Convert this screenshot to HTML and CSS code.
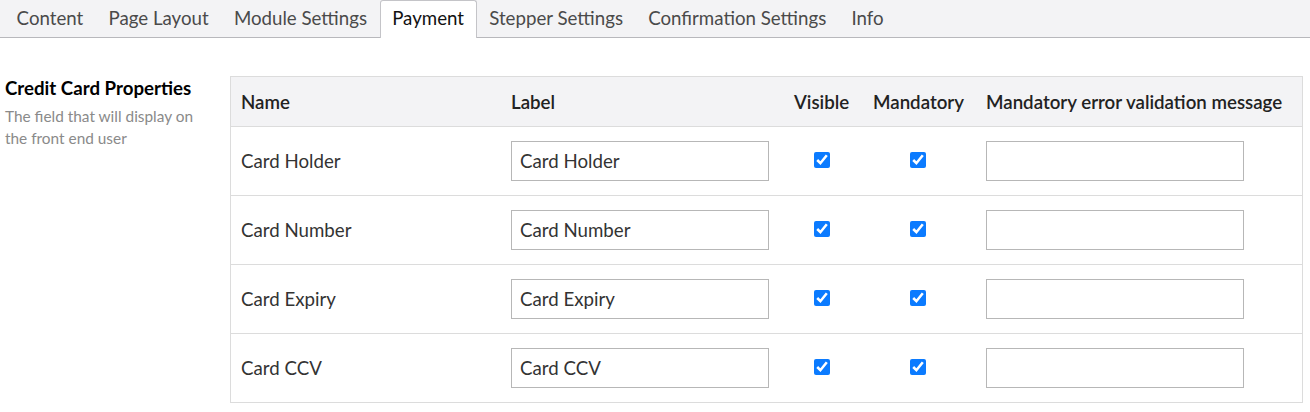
FILE: index.html
```html
<!DOCTYPE html>
<html lang="en">
  <head>
    <meta charset="UTF-8" />
    <title>Payment settings</title>
    <link rel="stylesheet" href="styles.css">
  </head>
  <body>
    <ul class="tabs">
      <li class="tab">Content</li>
      <li class="tab">Page Layout</li>
      <li class="tab">Module Settings</li>
      <li class="tab active">Payment</li>
      <li class="tab">Stepper Settings</li>
      <li class="tab">Confirmation Settings</li>
      <li class="tab">Info</li>
    </ul>
    <div class="section">
      <div class="section-info">
        <h3>Credit Card Properties</h3>
        <p>The field that will display on the front end user</p>
      </div>
      <table class="fields">
        <thead>
          <tr>
            <th class="col-name">Name</th>
            <th class="col-label">Label</th>
            <th class="col-visible">Visible</th>
            <th class="col-mandatory">Mandatory</th>
            <th class="col-error">Mandatory error validation message</th>
          </tr>
        </thead>
        <tbody id="rows"></tbody>
      </table>
    </div>
    <script>
      const fields = ["Card Holder", "Card Number", "Card Expiry", "Card CCV"];
      const rows = document.querySelector("#rows");

      fields.forEach((name) => {
        const tr = document.createElement("tr");
        tr.innerHTML =
          "<td>" + name + "</td>" +
          '<td><input class="text" type="text" value="' + name + '"></td>' +
          '<td class="center"><input type="checkbox" checked></td>' +
          '<td class="center"><input type="checkbox" checked></td>' +
          '<td><input class="text" type="text"></td>';
        rows.appendChild(tr);
      });
    </script>
  </body>
</html>
```

FILE: styles.css
```css
body {
  margin: 0;
  font-family: Lato, "Open Sans", Arial, sans-serif;
  color: #222;
  background: #fff;
}
ul.tabs {
  display: flex;
  margin: 0;
  padding: 0 0 0 4px;
  list-style: none;
  background: #f3f3f5;
  border-bottom: 1px solid #b8b8bc;
  height: 37px;
}
li.tab {
  padding: 0 11.6px;
  font-size: 18.7px;
  line-height: 35px;
  color: #4a4a4a;
  border: 1px solid transparent;
  border-bottom: none;
}
li.tab.active {
  background: #fff;
  color: #111;
  border-color: #c4c4c8;
  border-radius: 3px 3px 0 0;
  height: 37px;
  margin-bottom: -1px;
}
div.section {
  display: flex;
  padding: 38px 0 0 5px;
}
div.section-info {
  width: 225px;
}
div.section-info h3 {
  margin: 2px 0 0;
  font-size: 18.7px;
  line-height: 20px;
  color: #000;
}
div.section-info p {
  margin: 7px 0 0;
  padding-right: 20px;
  font-size: 15.4px;
  line-height: 22px;
  color: #8a8a8a;
}
table.fields {
  border-collapse: collapse;
  border: 1px solid #dcdcdc;
  width: 1073px;
}
table.fields th {
  background: #f3f3f5;
  text-align: left;
  font-size: 18.7px;
  font-weight: 600;
  height: 49px;
  padding: 0 0 0 10px;
  color: #222;
}
table.fields td {
  border-top: 1px solid #dcdcdc;
  height: 68px;
  padding: 0 0 0 10px;
  font-size: 18.7px;
  color: #333;
}
table.fields td.center {
  text-align: center;
  padding: 0;
}
th.col-name { width: 260px; }
th.col-label { width: 273px; }
th.col-visible { width: 69px; }
th.col-mandatory { width: 103px; }
input.text {
  box-sizing: border-box;
  width: 258px;
  height: 40px;
  border: 1px solid #b7b7b7;
  padding: 0 8px 1px;
  font-family: Lato, "Open Sans", Arial, sans-serif;
  font-size: 18.7px;
  color: #333;
  display: block;
}
input[type="checkbox"] {
  width: 16px;
  height: 16px;
  margin: 2px 3px 0 0;
  accent-color: #0b7bff;
}
```
